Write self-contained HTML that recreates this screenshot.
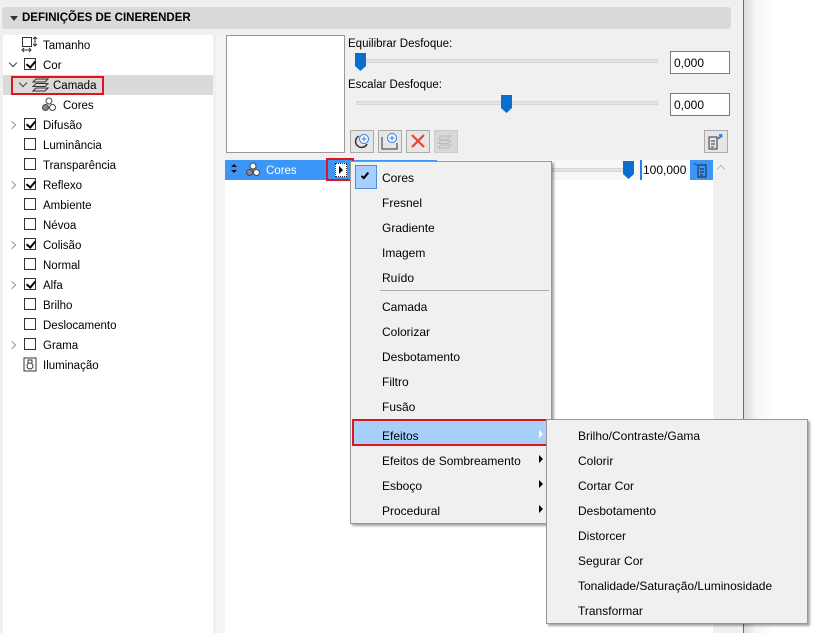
<!DOCTYPE html>
<html><head><meta charset="utf-8"><style>
*{margin:0;padding:0;box-sizing:border-box}
body{width:818px;height:633px;overflow:hidden;background:#f0f0f0;font-family:"Liberation Sans",sans-serif;font-size:11.5px;color:#000;position:relative}
.a{position:absolute}
.t{position:absolute;white-space:nowrap;line-height:14px}
.cb{position:absolute;width:12px;height:12px;border:1px solid #333;background:#fff}
.ck::after{content:"";position:absolute;left:3px;top:0px;width:4px;height:7px;border:solid #000;border-width:0 2px 2px 0;transform:rotate(40deg)}
.ar{position:absolute;width:6px;height:6px;border:solid #999;border-width:0 1.5px 1.5px 0;transform:rotate(-45deg)}
.ad{position:absolute;width:6px;height:6px;border:solid #444;border-width:0 1.5px 1.5px 0;transform:rotate(45deg)}
.mi{position:absolute;left:31px;white-space:nowrap;line-height:14px;font-size:12px}
.tri{position:absolute;width:0;height:0;border-left:4px solid #000;border-top:4px solid transparent;border-bottom:4px solid transparent}
.btn{position:absolute;width:24px;height:23px;border:1px solid #aaa;background:#e6e6e6}
.inp{position:absolute;width:60px;height:23px;border:1px solid #7a7a7a;background:#fff;padding:4px 3px;font-size:12px}
.trk{position:absolute;height:4px;background:#e3e3e3;border:1px solid #d6d6d6}
.thumb{position:absolute;width:11px;height:18px}
#tree .t{margin-top:1px}
</style></head><body>
<div class="a" style="left:744px;top:0;width:74px;height:633px;background:linear-gradient(90deg,#dcdcdc,#f6f6f6 12px,#fff 30px)"></div>
<div class="a" style="left:743px;top:0;width:1px;height:633px;background:#2b78c8"></div>
<div class="a" style="left:2px;top:7px;width:729px;height:22px;background:#d9d9d9;border-radius:3px"></div>
<div class="a" style="left:10px;top:16px;width:0;height:0;border-top:5px solid #333;border-left:4px solid transparent;border-right:4px solid transparent"></div>
<div class="t" style="left:22px;top:11px;font-weight:bold;font-size:11.5px">DEFINIÇÕES DE CINERENDER</div>
<div class="a" style="left:3px;top:35px;width:210px;height:598px;background:#fff"></div>
<div class="a" style="left:216px;top:35px;width:9px;height:598px;background:#f4f4f4"></div>
<div class="a" style="left:3px;top:75px;width:210px;height:20px;background:#dadada"></div>
<div class="a" style="left:11px;top:76px;width:93px;height:19px;border:2px solid #e0141e"></div>
<div id="tree">
<svg class="a" style="left:21px;top:36px" width="18" height="17" viewBox="0 0 18 17"><rect x="1.5" y="1.5" width="9" height="9" fill="none" stroke="#333"/><path d="M14 1v9M12 3l2-2 2 2M12 8l2 2 2-2M1 14h9M3 12l-2 2 2 2M8 12l2 2-2 2" stroke="#333" fill="none"/></svg>
<div class="t" style="left:43px;top:38px">Tamanho</div>
<div class="ad" style="left:10px;top:60px"></div><div class="cb ck" style="left:24px;top:58px"></div><div class="t" style="left:43px;top:58px">Cor</div>
<div class="ad" style="left:20px;top:80px"></div>
<svg class="a" style="left:32px;top:77px" width="18" height="16" viewBox="0 0 18 16"><path d="M4 2h12l-3 3H1zM4 6.5h12l-3 3H1zM4 11h12l-3 3H1z" fill="none" stroke="#333"/></svg>
<div class="t" style="left:53px;top:78px">Camada</div>
<svg class="a" style="left:41px;top:97px" width="16" height="15" viewBox="0 0 16 15"><circle cx="8" cy="4" r="3" fill="#fff" stroke="#444"/><circle cx="4.5" cy="10.5" r="3" fill="#888" stroke="#444"/><circle cx="11.5" cy="10.5" r="3" fill="#fff" stroke="#444"/></svg>
<div class="t" style="left:63px;top:98px">Cores</div>
<div class="ar" style="left:9px;top:122px"></div><div class="cb ck" style="left:24px;top:118px"></div><div class="t" style="left:43px;top:118px">Difusão</div>
<div class="cb" style="left:24px;top:138px"></div><div class="t" style="left:43px;top:138px">Luminância</div>
<div class="cb" style="left:24px;top:158px"></div><div class="t" style="left:43px;top:158px">Transparência</div>
<div class="ar" style="left:9px;top:182px"></div><div class="cb ck" style="left:24px;top:178px"></div><div class="t" style="left:43px;top:178px">Reflexo</div>
<div class="cb" style="left:24px;top:198px"></div><div class="t" style="left:43px;top:198px">Ambiente</div>
<div class="cb" style="left:24px;top:218px"></div><div class="t" style="left:43px;top:218px">Névoa</div>
<div class="ar" style="left:9px;top:242px"></div><div class="cb ck" style="left:24px;top:238px"></div><div class="t" style="left:43px;top:238px">Colisão</div>
<div class="cb" style="left:24px;top:258px"></div><div class="t" style="left:43px;top:258px">Normal</div>
<div class="ar" style="left:9px;top:282px"></div><div class="cb ck" style="left:24px;top:278px"></div><div class="t" style="left:43px;top:278px">Alfa</div>
<div class="cb" style="left:24px;top:298px"></div><div class="t" style="left:43px;top:298px">Brilho</div>
<div class="cb" style="left:24px;top:318px"></div><div class="t" style="left:43px;top:318px">Deslocamento</div>
<div class="ar" style="left:9px;top:342px"></div><div class="cb" style="left:24px;top:338px"></div><div class="t" style="left:43px;top:338px">Grama</div>
<svg class="a" style="left:23px;top:357px" width="14" height="15" viewBox="0 0 14 15"><rect x="1" y="1" width="12" height="13" fill="none" stroke="#333"/><circle cx="7" cy="9" r="3" fill="none" stroke="#333"/><path d="M5 6V3h4v3" fill="none" stroke="#333"/></svg>
<div class="t" style="left:43px;top:358px">Iluminação</div>
</div>
<div class="a" style="left:226px;top:35px;width:119px;height:118px;background:#fff;border:1px solid #999"></div>
<div class="t" style="left:348px;top:37px">Equilibrar Desfoque:</div>
<div class="trk" style="left:356px;top:59px;width:302px"></div>
<svg class="thumb" style="left:355px;top:53px" viewBox="0 0 11 18"><path d="M0 0h11v13l-5.5 5L0 13z" fill="#0a6ed1"/></svg>
<div class="inp" style="left:670px;top:51px">0,000</div>
<div class="t" style="left:348px;top:78px">Escalar Desfoque:</div>
<div class="trk" style="left:356px;top:101px;width:302px"></div>
<svg class="thumb" style="left:501px;top:95px" viewBox="0 0 11 18"><path d="M0 0h11v13l-5.5 5L0 13z" fill="#0a6ed1"/></svg>
<div class="inp" style="left:670px;top:93px">0,000</div>
<div class="btn" style="left:350px;top:130px"><svg width="22" height="21" viewBox="0 0 22 21"><path d="M8 5a6 6 0 1 0 8 8" fill="none" stroke="#333" stroke-width="1.5"/><circle cx="13" cy="8" r="4.5" fill="#fff" stroke="#2a7de1"/><path d="M13 5.5v5M10.5 8h5" stroke="#2a7de1"/></svg></div>
<div class="btn" style="left:378px;top:130px"><svg width="22" height="21" viewBox="0 0 22 21"><path d="M3 6v12h15V12" fill="none" stroke="#333"/><circle cx="13" cy="7" r="4.5" fill="#fff" stroke="#2a7de1"/><path d="M13 4.5v5M10.5 7h5" stroke="#2a7de1"/></svg></div>
<div class="btn" style="left:406px;top:130px"><svg width="22" height="21" viewBox="0 0 22 21"><path d="M5 4l12 12M17 4L5 16" stroke="#e8452c" stroke-width="2.2"/></svg></div>
<div class="btn" style="left:434px;top:130px;background:#d8d8d8;border-color:#ccc"><svg width="22" height="21" viewBox="0 0 22 21"><path d="M6 5h10l-3 3H3zM6 9.5h10l-3 3H3zM6 14h10l-3 3H3z" fill="none" stroke="#bbb"/></svg></div>
<div class="btn" style="left:704px;top:130px"><svg width="22" height="21" viewBox="0 0 22 21"><path d="M4 6h8v12H4zM6 10h4M6 13h4M6 16h3" fill="none" stroke="#333"/><path d="M12 8q3-1 4-4M14 4h2.5v2.5" fill="none" stroke="#2a7de1" stroke-width="1.8"/></svg></div>
<div class="a" style="left:225px;top:160px;width:488px;height:473px;background:#fff"></div>
<div class="a" style="left:225px;top:160px;width:212px;height:20px;background:#3b96f7"></div>
<div class="a" style="left:437px;top:160px;width:204px;height:20px;background:#f7f7f7"></div>
<div class="trk" style="left:437px;top:168px;width:195px"></div>
<svg class="thumb" style="left:623px;top:161px" viewBox="0 0 11 18"><path d="M0 0h11v13l-5.5 5L0 13z" fill="#0a6ed1"/></svg>
<div class="a" style="left:640px;top:160px;width:50px;height:20px;background:#fff;border-left:2px solid #2a7de1;font-size:12px;padding:3px 1px">100,000</div>
<div class="a" style="left:690px;top:160px;width:23px;height:20px;background:#3b96f7"><svg width="23" height="20" viewBox="0 0 23 20"><path d="M8 5h8v12H8zM10 9h4M10 12h4M10 15h3" fill="none" stroke="#222"/><path d="M4 4q4 0 5 5" fill="none" stroke="#1f5fbf" stroke-width="1.6"/></svg></div>
<div class="a" style="left:718px;top:166px;width:6px;height:6px;border:solid #bbb;border-width:1.5px 0 0 1.5px;transform:rotate(45deg)"></div>
<div class="a" style="left:231px;top:164px;width:0;height:0;border-bottom:3px solid #111;border-left:3px solid transparent;border-right:3px solid transparent"></div>
<div class="a" style="left:231px;top:170px;width:0;height:0;border-top:3px solid #111;border-left:3px solid transparent;border-right:3px solid transparent"></div>
<svg class="a" style="left:245px;top:162px" width="16" height="15" viewBox="0 0 16 15"><circle cx="8" cy="4" r="3" fill="#fff" stroke="#444"/><circle cx="4.5" cy="10.5" r="3" fill="#888" stroke="#444"/><circle cx="11.5" cy="10.5" r="3" fill="#fff" stroke="#444"/></svg>
<div class="t" style="left:266px;top:164px;color:#fff">Cores</div>
<div class="a" style="left:335px;top:163px;width:12px;height:14px;background:#fff;border:1px dotted #222"></div>
<div class="tri" style="left:339px;top:166px"></div>
<div class="a" style="left:326px;top:158px;width:28px;height:23px;border:2px solid #e0141e"></div>
<div class="a" style="left:350px;top:161px;width:202px;height:363px;background:#f0f0f0;border:1px solid #979797;box-shadow:2px 2px 2px rgba(0,0,0,.35)">
 <div class="a" style="left:4px;top:3px;width:22px;height:24px;background:#a8d0fb;border:1px solid #4a8fe0"></div>
 <div class="a" style="left:12px;top:9px;width:4px;height:8px;border:solid #000;border-width:0 2px 2px 0;transform:rotate(40deg)"></div>
 <div class="mi" style="top:9px">Cores</div>
 <div class="mi" style="top:34px">Fresnel</div>
 <div class="mi" style="top:59px">Gradiente</div>
 <div class="mi" style="top:84px">Imagem</div>
 <div class="mi" style="top:109px">Ruído</div>
 <div class="a" style="left:29px;top:128px;width:169px;height:1px;background:#aaa"></div>
 <div class="mi" style="top:138px">Camada</div>
 <div class="mi" style="top:163px">Colorizar</div>
 <div class="mi" style="top:188px">Desbotamento</div>
 <div class="mi" style="top:213px">Filtro</div>
 <div class="mi" style="top:238px">Fusão</div>
 <div class="a" style="left:1px;top:257px;width:197px;height:27px;background:#a6cffc;border:2px solid #e0141e"></div>
 <div class="mi" style="top:267px">Efeitos</div>
 <div class="tri" style="left:188px;top:268px;border-left-color:#fff"></div>
 <div class="mi" style="top:292px">Efeitos de Sombreamento</div><div class="tri" style="left:188px;top:293px"></div>
 <div class="mi" style="top:317px">Esboço</div><div class="tri" style="left:188px;top:318px"></div>
 <div class="mi" style="top:342px">Procedural</div><div class="tri" style="left:188px;top:343px"></div>
</div>
<div class="a" style="left:546px;top:419px;width:262px;height:205px;background:#f0f0f0;border:1px solid #979797;box-shadow:2px 2px 2px rgba(0,0,0,.35)">
 <div class="mi" style="top:9px">Brilho/Contraste/Gama</div>
 <div class="mi" style="top:34px">Colorir</div>
 <div class="mi" style="top:59px">Cortar Cor</div>
 <div class="mi" style="top:84px">Desbotamento</div>
 <div class="mi" style="top:109px">Distorcer</div>
 <div class="mi" style="top:134px">Segurar Cor</div>
 <div class="mi" style="top:159px">Tonalidade/Saturação/Luminosidade</div>
 <div class="mi" style="top:184px">Transformar</div>
</div>
</body></html>
